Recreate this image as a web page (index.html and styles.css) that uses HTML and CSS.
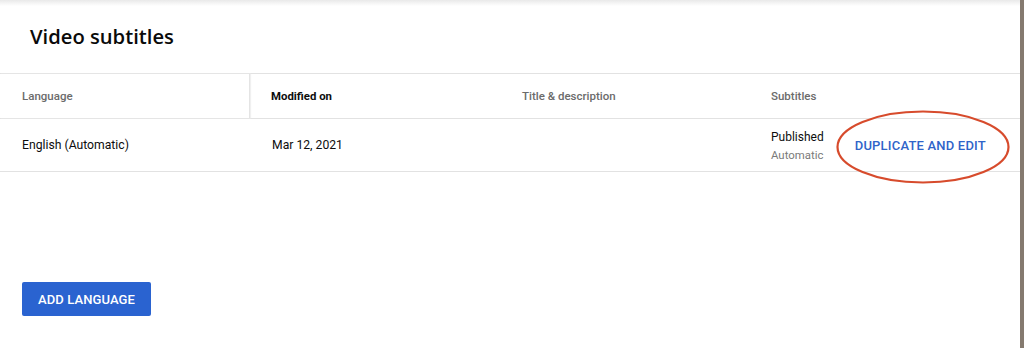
FILE: index.html
```html
<!DOCTYPE html>
<html>
<head>
<meta charset="utf-8">
<link rel="stylesheet" href="styles.css">
</head>
<body>
<div class="page">
  <div class="main">
    <div class="topshade"></div>
    <h1 class="title">Video subtitles</h1>
    <div class="table">
      <div class="row head">
        <div class="cell c1 divider">Language</div>
        <div class="cell c2 strong">Modified on</div>
        <div class="cell c3">Title &amp; description</div>
        <div class="cell c4">Subtitles</div>
      </div>
      <div class="row body">
        <div class="cell c1">English (Automatic)</div>
        <div class="cell c2">Mar 12, 2021</div>
        <div class="cell c3"></div>
        <div class="cell c4 subs">
          <div class="status">
            <div class="pub">Published</div>
            <div class="auto">Automatic</div>
          </div>
          <div class="dup-wrap">
            <span class="dup">DUPLICATE AND EDIT</span>
            <svg class="circle" width="176" height="76" viewBox="0 0 176 76"><ellipse cx="88" cy="38" rx="85.5" ry="35.5" fill="none" stroke="#d74b2c" stroke-width="2.2"/></svg>
          </div>
        </div>
      </div>
    </div>
    <div class="actions">
      <button class="add">ADD LANGUAGE</button>
    </div>
  </div>
  <div class="strip"></div>
</div>
</body>
</html>
```
FILE: styles.css
```css
* { box-sizing: border-box; }
html, body { margin: 0; padding: 0; }
body {
  width: 1024px;
  height: 348px;
  overflow: hidden;
  background: #fff;
  font-family: Roboto, "Liberation Sans", sans-serif;
  color: #0d0d0d;
}
.page { display: flex; height: 348px; }
.main { flex: 1; position: relative; display: flex; flex-direction: column; }
.strip { width: 4px; background: #857a6f; }
.topshade {
  position: absolute; left: 0; right: 0; top: 0; height: 6px;
  background: linear-gradient(#e9e9e9, rgba(255,255,255,0));
}
.title {
  margin: 0;
  height: 73px;
  padding: 22px 0 0 30px;
  font-family: "Open Sans", sans-serif;
  font-weight: 600;
  font-size: 20.2px;
  line-height: 28px;
  color: #0a0a0a;
}
.table { border-top: 1px solid #e2e2e2; }
.row { display: flex; border-bottom: 1px solid #e2e2e2; }
.row.head { height: 45px; }
.row.body { height: 53px; }
.cell { width: 250px; padding-left: 22px; display: flex; align-items: center; }
.c4 { flex: 1; }
.head .cell { font-size: 11.5px; font-weight: 500; color: #6b6b6b; }
.head .cell.strong { color: #0d0d0d; font-weight: 700; font-size: 11.4px; }
.divider { border-right: 1px solid #e4e4e4; box-shadow: 1px 0 1px #f0f0f0; }
.head .c2 { padding-left: 21px; }
.head .c3 { width: 249px; }
.body .cell { font-size: 12.2px; }
.body .c3 { width: 249px; }
.subs { gap: 31px; }
.status { display: flex; flex-direction: column; padding-top: 1px; }
.pub { font-size: 12px; line-height: 18px; color: #0d0d0d; }
.auto { font-size: 11.4px; line-height: 18px; color: #7a7a7a; }
.dup-wrap { position: relative; }
.dup { font-size: 13px; font-weight: 500; color: #2f64c9; letter-spacing: 0.2px; }
.circle { position: absolute; left: -20px; top: -29px; }
.actions { padding: 110px 0 0 22px; }
.add {
  width: 129px; height: 34px;
  border: none; border-radius: 2px;
  background: #2a63d0;
  color: #fff;
  font-family: Roboto, sans-serif;
  font-size: 13px; font-weight: 500;
  letter-spacing: 0.1px;
  padding: 0;
}
```
